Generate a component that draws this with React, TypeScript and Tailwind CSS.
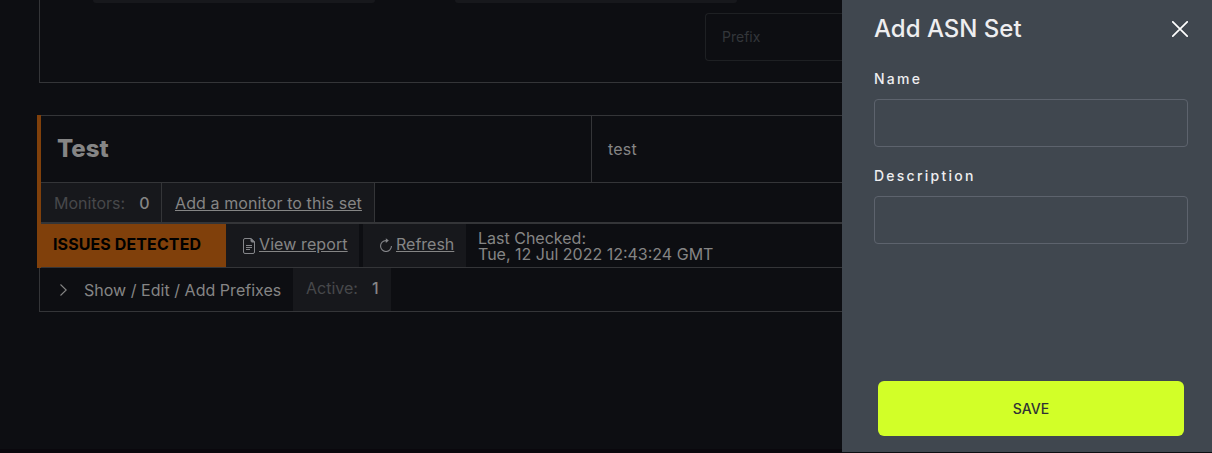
import React from "react";

function ReportIcon() {
  return (
    <svg className="h-4 w-3 shrink-0" viewBox="0 0 12 16" fill="none" stroke="#85868a" strokeWidth="1">
      <path d="M2 .5h6L11.500 4v10a1.500 1.500 0 0 1-1.500 1.500H2A1.500 1.500 0 0 1 .5 14V2A1.500 1.500 0 0 1 2 .5Z" />
      <path d="M8 .5V3a1 1 0 0 0 1 1h2.500Z" fill="#85868a" />
      <path d="M3 7.500h6M3 9.500h6M3 11.500h4" />
    </svg>
  );
}

function RefreshIcon() {
  return (
    <svg className="h-[14px] w-3 shrink-0" viewBox="0 0 12 14" fill="none" stroke="#85868a" strokeWidth="1.100">
      <path d="M7.200 2.600H6A5.450 5.450 0 1 0 11.450 8" />
      <path d="M5.800 .2 8.800 2.600 5.800 5Z" fill="#85868a" stroke="none" />
    </svg>
  );
}

function Field({ label }: { label: string }) {
  return (
    <label className="flex flex-col">
      <span className="h-5 text-[14px] font-[450] leading-5 tracking-[2.250px] text-[#eeeef0]">{label}</span>
      <input className="mt-[10px] h-12 w-[314px] rounded-[4px] border border-[#5d636d] bg-transparent px-4 text-white outline-none" />
    </label>
  );
}

export default function App() {
  return (
    <div className="flex h-[453px] w-[1212px] overflow-hidden bg-[#0d0e12] font-['Inter',sans-serif] text-[16px] text-[#858585]">
      <main className="flex h-full w-[842px] shrink-0 flex-col overflow-hidden border-b-4 border-[#0a080d]">
        <section className="ml-[39px] flex h-[83px] shrink-0 flex-col border-b border-l border-[#343538]">
          <div className="flex h-[3px] shrink-0">
            <div className="ml-[53px] w-[282px] rounded-b-[4px] bg-[#17181c]" />
            <div className="ml-[80px] w-[282px] rounded-b-[4px] bg-[#17181c]" />
          </div>
          <div className="ml-[665px] mt-[10px] flex h-12 shrink-0 items-center rounded-l-[4px] border border-r-0 border-[#1e2023] pb-[2px] pl-4 text-[14px] text-[#33363a]">
            Prefix
          </div>
        </section>

        <section className="ml-[37px] mt-8 flex h-[153px] shrink-0">
          <div className="w-1 shrink-0 bg-[#80400b]" />
          <div className="flex flex-1 flex-col border-t border-[#343538]">
            <div className="flex h-[67px] border-b border-[#343538]">
              <h2 className="flex w-[551px] items-center border-r border-[#343538] pl-4 text-[24px] font-extrabold">
                Test
              </h2>
              <div className="flex items-center pl-4 tracking-[0.2px]">test</div>
            </div>
            <div className="flex h-[41px] border-b-2 border-[#343538]">
              <div className="flex w-[121px] items-center border-r border-[#343538] bg-[#17181c] pl-[13px]">
                <span className="text-[#47484b]">Monitors:</span>
                <span className="ml-[14px] font-medium">0</span>
              </div>
              <div className="flex w-[213px] items-center border-r border-[#343538] bg-[#17181c] pl-[13px]">
                <a className="whitespace-nowrap tracking-[0.1px] underline">Add a monitor to this set</a>
              </div>
            </div>
            <div className="flex h-11 border-b border-[#343538]">
              <div className="flex w-[185px] items-center bg-[#80400b] pb-[3px] pl-3 font-bold tracking-[0.1px] text-black">
                ISSUES DETECTED
              </div>
              <div className="flex w-[133px] items-center bg-[#17181c] pb-[3px] pl-[17px]">
                <span className="mt-1"><ReportIcon /></span>
                <a className="ml-1 whitespace-nowrap tracking-[0.1px] underline">View report</a>
              </div>
              <div className="ml-1 flex w-[103px] items-center bg-[#17181c] pb-[3px] pl-[17px]">
                <span className="mt-[2px]"><RefreshIcon /></span>
                <a className="ml-1 underline">Refresh</a>
              </div>
              <p className="whitespace-nowrap pl-3 pt-[6px] leading-4">
                Last Checked:
                <br />
                Tue, 12 Jul 2022 12:43:24 GMT
              </p>
            </div>
          </div>
        </section>

        <section className="ml-[39px] flex h-11 shrink-0 border-b border-l border-[#343538]">
          <button className="flex w-[253px] items-center pl-[20px]">
            <svg className="h-3 w-[7px] shrink-0" viewBox="0 0 7 12" fill="none" stroke="#858585" strokeWidth="1.100">
              <path d="m.5.5 5.700 5.500L.5 11.500" />
            </svg>
            <span className="ml-[17px] whitespace-nowrap tracking-[0.03px]">Show / Edit / Add Prefixes</span>
          </button>
          <div className="flex w-[98px] items-center bg-[#17181c] pb-[3px] pl-[13px]">
            <span className="text-[#47484b]">Active:</span>
            <span className="ml-[14px] font-medium">1</span>
          </div>
        </section>
      </main>

      <aside className="flex h-[452px] w-[370px] shrink-0 flex-col bg-[#40474f] px-8">
        <header className="flex h-14 shrink-0 items-center justify-between">
          <h1 className="pt-[2px] text-[24px] font-medium leading-8 text-[#eeeef0]">Add ASN Set</h1>
          <button aria-label="Close" className="-mr-2 pt-[2px]">
            <svg className="h-4 w-4" viewBox="0 0 16 16" fill="none" stroke="white" strokeWidth="1.700" strokeLinecap="round">
              <path d="m.8.8 14.400 14.400M15.200.8.8 15.200" />
            </svg>
          </button>
        </header>
        <div className="mt-[13px] flex flex-col gap-[19px]">
          <Field label="Name" />
          <Field label="Description" />
        </div>
        <button className="mb-4 ml-1 mt-auto h-[55px] w-[306px] shrink-0 rounded-[6px] bg-[#d2ff28] text-[14px] font-medium text-[#303236]">
          SAVE
        </button>
      </aside>
    </div>
  );
}
